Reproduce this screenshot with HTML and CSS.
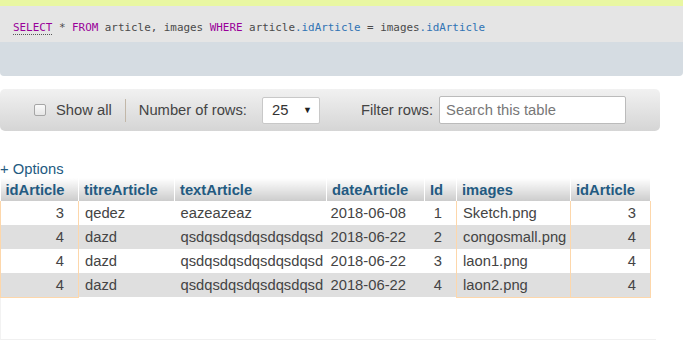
FILE: index.html
```html
<!DOCTYPE html>
<html lang="en">
<head>
    <meta charset="UTF-8">
    <meta name="viewport" content="width=device-width, initial-scale=1.0">
    <title>SQL result</title>
    <link rel="stylesheet" href="styles.css">
</head>
<body>
    <div class="sql-strip"></div>
    <div class="sql-query">
        <code><span class="kw sel">SELECT</span> * <span class="kw">FROM</span> article, images <span class="kw">WHERE</span> article<span class="var">.idArticle</span> = images<span class="var">.idArticle</span></code>
    </div>
    <div class="sql-tools"></div>

    <div class="navigation">
        <label class="show-all"><span class="fake-check"></span>Show all</label>
        <span class="sep"></span>
        <span class="nav-label">Number of rows:</span>
        <div class="rows-select"><span>25</span><span class="arrow">&#9660;</span></div>
        <span class="nav-label filter-label">Filter rows:</span>
        <input type="text" class="filter-input" placeholder="Search this table">
    </div>

    <a href="#" class="options">+ Options</a>
    <table class="data">
        <colgroup>
            <col style="width: 78px">
            <col style="width: 96px">
            <col style="width: 152px">
            <col style="width: 98px">
            <col style="width: 32px">
            <col style="width: 114px">
            <col style="width: 80px">
        </colgroup>
        <thead>
            <tr>
                <th>idArticle</th>
                <th>titreArticle</th>
                <th>textArticle</th>
                <th>dateArticle</th>
                <th>Id</th>
                <th>images</th>
                <th>idArticle</th>
            </tr>
        </thead>
        <tbody>
            <tr>
                <td class="num mark">3</td>
                <td>qedez</td>
                <td>eazeazeaz</td>
                <td class="date">2018-06-08</td>
                <td class="num">1</td>
                <td class="mark">Sketch.png</td>
                <td class="num mark">3</td>
            </tr>
            <tr>
                <td class="num mark">4</td>
                <td>dazd</td>
                <td>qsdqsdqsdqsdqsdqsd</td>
                <td class="date">2018-06-22</td>
                <td class="num">2</td>
                <td class="mark">congosmall.png</td>
                <td class="num mark">4</td>
            </tr>
            <tr>
                <td class="num mark">4</td>
                <td>dazd</td>
                <td>qsdqsdqsdqsdqsdqsd</td>
                <td class="date">2018-06-22</td>
                <td class="num">3</td>
                <td class="mark">laon1.png</td>
                <td class="num mark">4</td>
            </tr>
            <tr>
                <td class="num mark">4</td>
                <td>dazd</td>
                <td>qsdqsdqsdqsdqsdqsd</td>
                <td class="date">2018-06-22</td>
                <td class="num">4</td>
                <td class="mark">laon2.png</td>
                <td class="num mark">4</td>
            </tr>
        </tbody>
    </table>
    <div class="results-end"></div>
</body>
</html>
```

FILE: styles.css
```css
*,
*::after,
*::before {
    box-sizing: border-box;
}
body {
    margin: 0;
    font-family: "Liberation Sans", Arial, sans-serif;
    font-size: 14.75px;
    color: #444;
    background: #fff;
}
.sql-strip {
    height: 6px;
    background: #e9f7a2;
}
.sql-query {
    height: 36px;
    padding: 12px 13px 0;
    background: #e5e5e5;
}
.sql-query code {
    font-family: "DejaVu Sans Mono", monospace;
    font-size: 10.9px;
    color: #4a4a4a;
    white-space: pre;
}
.sql-query .kw {
    color: #990099;
}
.sql-query .sel {
    border-bottom: 1px dotted #555;
}
.sql-query .var {
    color: #2f73b4;
}
.sql-tools {
    height: 34px;
    background: #d5dce2;
    border-radius: 0 0 4px 4px;
}
.navigation {
    display: flex;
    align-items: center;
    width: 660px;
    height: 42px;
    margin-top: 13px;
    padding-left: 34px;
    background: linear-gradient(#f1f1f1, #d5d5d5);
    border-radius: 5px;
}
.show-all {
    display: flex;
    align-items: center;
}
.fake-check {
    width: 12px;
    height: 12px;
    margin-right: 10px;
    border: 1px solid #a6a6a6;
    border-radius: 2px;
    background: linear-gradient(#fafafa, #e6e6e6);
}
.sep {
    width: 1px;
    height: 23px;
    margin: 0 13px;
    background: #c2b7a8;
}
.rows-select {
    display: flex;
    align-items: center;
    justify-content: space-between;
    width: 58px;
    height: 27px;
    margin-left: 15px;
    padding: 0 7px 0 9px;
    background: #fff;
    border: 1px solid #c8c8c8;
    border-radius: 2px;
    color: #333;
}
.rows-select .arrow {
    font-size: 9px;
    color: #222;
}
.filter-label {
    margin-left: 41px;
}
.filter-input {
    width: 187px;
    height: 28px;
    margin-left: 6px;
    padding: 0 6px;
    border: 1px solid #bbb;
    border-radius: 2px;
    font-family: inherit;
    font-size: 14.75px;
    color: #333;
}
.filter-input::placeholder {
    color: #777;
}
.options {
    display: block;
    margin-top: 30px;
    height: 17px;
    line-height: 17px;
    color: #235a81;
    text-decoration: none;
}
.data {
    width: 650px;
    table-layout: fixed;
    border-collapse: collapse;
}
.data th {
    height: 23px;
    padding: 0 5px;
    text-align: left;
    font-weight: bold;
    color: #235a81;
    background: linear-gradient(#ffffff, #cccccc);
    border-right: 1px solid #fff;
    white-space: nowrap;
}
.data td {
    height: 24px;
    padding: 0 5px 0 6px;
    white-space: nowrap;
    overflow: hidden;
}
.data td.date {
    padding-left: 4px;
}
.data td.num {
    text-align: right;
    padding-right: 14px;
}
.data tbody tr:nth-child(even) td {
    background: #dfdfdf;
}
.data td.mark {
    border-left: 1px solid #fdd7ab;
    border-right: 1px solid #fdd7ab;
}
.data tbody tr:last-child td.mark {
    border-bottom: 1px solid #fdd7ab;
}
.results-end {
    width: 656px;
    height: 42px;
    border-left: 1px solid #f2f2f2;
    border-bottom: 1px solid #f0f0f0;
}
```
